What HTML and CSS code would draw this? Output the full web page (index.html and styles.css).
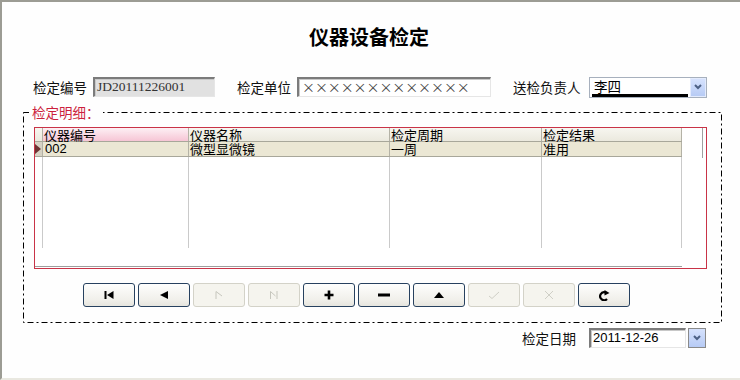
FILE: index.html
```html
<!DOCTYPE html>
<html lang="zh-CN">
<head>
<meta charset="utf-8">
<title>仪器设备检定</title>
<link rel="stylesheet" href="styles.css">
</head>
<body>
<div class="win">
  <h1 class="title">仪器设备检定</h1>
  <div class="row1">
    <span class="lbl l4">检定编号</span>
    <div class="inp inp-ro">JD20111226001</div>
    <span class="lbl l4 lgap">检定单位</span>
    <div class="inp inp-unit">×××××××××××××</div>
    <span class="lbl l5 lgap">送检负责人</span>
    <div class="combo">
      <span class="combo-text"><span class="uline">李四</span></span>
      <span class="ddbtn"><svg viewBox="0 0 10 10" width="10" height="10"><path d="M2 3 L5 6 L8 3" fill="none" stroke="#4d6185" stroke-width="2"/></svg></span>
    </div>
  </div>

  <div class="group">
    <svg class="group-border" width="699" height="211" viewBox="0 0 699 211"><rect x="0.5" y="0.5" width="698" height="210" fill="none" stroke="#000" stroke-width="1" stroke-dasharray="6 3 2 3"/></svg>
    <div class="legend">检定明细：</div>
    <div class="grid">
      <div class="tbl">
        <div class="trow thead">
          <div class="cell ind"></div>
          <div class="cell c1 sel">仪器编号</div>
          <div class="cell c2">仪器名称</div>
          <div class="cell c3">检定周期</div>
          <div class="cell c4">检定结果</div>
        </div>
        <div class="trow tdata">
          <div class="cell ind"><svg viewBox="0 0 6 10" width="6" height="10"><polygon points="0,0 6,5 0,10" fill="#6e3434"/></svg></div>
          <div class="cell c1 num">002</div>
          <div class="cell c2">微型显微镜</div>
          <div class="cell c3">一周</div>
          <div class="cell c4">准用</div>
        </div>
        <div class="tbody">
          <div class="bcol ind"></div>
          <div class="bcol c1"></div>
          <div class="bcol c2"></div>
          <div class="bcol c3"></div>
          <div class="bcol c4"></div>
        </div>
      </div>
      <div class="vtick"></div>
    </div>
    <div class="navbar">
      <button class="btn"><svg viewBox="0 0 10 8" width="10" height="8"><rect x="0.5" y="0" width="2" height="8"/><polygon points="9.5,0 3,4 9.5,8"/></svg></button>
      <button class="btn"><svg viewBox="0 0 8 8" width="8" height="8"><polygon points="8,0 0,4 8,8"/></svg></button>
      <button class="btn dis"><svg viewBox="0 0 10 10" width="10" height="10"><path d="M2 1.5 V9 M2 1.5 L8 6" fill="none" stroke="#c6c6bd" stroke-width="1"/></svg></button>
      <button class="btn dis"><svg viewBox="0 0 10 10" width="10" height="10"><path d="M1.5 1.5 V9 M1.5 1.5 L6.5 6 M8 1 V9" fill="none" stroke="#c6c6bd" stroke-width="1"/></svg></button>
      <button class="btn"><svg viewBox="0 0 10 10" width="10" height="10"><path d="M5 0.5 V9.5 M0.5 5 H9.5" fill="none" stroke="#000" stroke-width="2.6"/></svg></button>
      <button class="btn"><svg viewBox="0 0 12 4" width="12" height="4"><rect x="0" y="0.5" width="12" height="3"/></svg></button>
      <button class="btn"><svg viewBox="0 0 10 6" width="10" height="6"><polygon points="0,6 5,0 10,6"/></svg></button>
      <button class="btn dis"><svg viewBox="0 0 12 10" width="12" height="10"><path d="M1 6 L4 8.5 L11 2" fill="none" stroke="#cfcfc6" stroke-width="1"/></svg></button>
      <button class="btn dis"><svg viewBox="0 0 10 10" width="10" height="10"><path d="M1 1 L9 9 M9 1 L1 9" fill="none" stroke="#cfcfc6" stroke-width="1"/></svg></button>
      <button class="btn"><svg viewBox="0 0 11 11" width="11" height="11"><path d="M8 9 A4 4 0 1 1 6.5 2.4" fill="none" stroke="#000" stroke-width="2.2"/><polygon points="5.5,0 10.5,3 5.5,5.5" fill="#000"/></svg></button>
    </div>
  </div>

  <div class="daterow">
    <span class="lbl l4">检定日期</span>
    <div class="inp inp-date">2011-12-26</div>
    <span class="ddbtn ddbtn-date"><svg viewBox="0 0 10 10" width="10" height="10"><path d="M2 3 L5 6 L8 3" fill="none" stroke="#4d6185" stroke-width="2"/></svg></span>
  </div>
</div>
</body>
</html>
```

FILE: styles.css
```css
* { box-sizing: border-box; }

body {
  margin: 0;
  background: #fff;
}

.win {
  width: 740px;
  height: 380px;
  border-top: 2px solid #9c9c94;
  border-left: 2px solid #9c9c94;
  border-bottom: 2px solid #e9e8e0;
  background: #fefefe;
  font-family: "Noto Sans CJK SC", "Liberation Sans", sans-serif;
  color: #000;
  overflow: hidden;
}

.title {
  margin: 25px 0 0 0;
  height: 20px;
  font-size: 20px;
  line-height: 20px;
  font-weight: bold;
  text-align: center;
  padding-right: 4px;
}

.row1 {
  margin-top: 30px;
  height: 20px;
  display: flex;
  align-items: center;
  padding-left: 31px;
}

.lbl {
  font-size: 13.5px;
  line-height: 20px;
  white-space: nowrap;
  color: #111;
}

.l4 { width: 54px; margin-right: 6px; }
.l5 { width: 70px; margin-right: 6px; }
.lgap { margin-left: 22px; }

.inp {
  height: 20px;
  border-style: solid;
  border-width: 2px 1px 1px 2px;
  border-color: #7b7b7b #e6e6e6 #e6e6e6 #7b7b7b;
  box-shadow: inset 1px 1px 0 #c8c8c8;
  line-height: 16px;
  padding-left: 2px;
  white-space: nowrap;
  overflow: hidden;
}

.inp-ro {
  width: 122px;
  background: #e1e1e1;
  font-family: "Liberation Serif", serif;
  font-size: 13.5px;
  color: #333;
}

.inp-unit {
  width: 194px;
  background: #fff;
  font-size: 13px;
  color: #444;
  padding-left: 3px;
  letter-spacing: -0.1px;
}

.combo {
  width: 118px;
  height: 21px;
  border: 1px solid #a7b0bd;
  background: #fff;
  display: flex;
  align-items: stretch;
}

.combo-text {
  flex: 1;
  padding: 1px 2px 0 2px;
}

.uline {
  display: block;
  width: 96px;
  height: 18px;
  font-size: 13.5px;
  line-height: 15px;
  border-bottom: 3px solid #000;
  padding-left: 2px;
}

.ddbtn {
  width: 16px;
  background: linear-gradient(#d6e2fd, #b7cbf5);
  border: 1px solid #e3ebfd;
  display: flex;
  align-items: center;
  justify-content: center;
}

.group {
  position: relative;
  margin-top: 15px;
  margin-left: 21px;
  width: 699px;
  height: 211px;
  padding: 15px 0 0 11px;
}

.group-border {
  position: absolute;
  left: 0;
  top: 0;
}

.legend {
  position: absolute;
  left: 6px;
  top: -8px;
  background: #fefefe;
  color: #cc1f3d;
  font-size: 13.5px;
  line-height: 16px;
  padding: 0 3px 0 3px;
}

.grid {
  width: 673px;
  height: 142px;
  border: 1px solid #c93347;
  background: #fff;
  display: flex;
  align-items: flex-start;
}

.tbl {
  width: 647px;
  height: 139px;
  border-bottom: 1px solid #9e9e9e;
  display: flex;
  flex-direction: column;
}

.trow {
  display: flex;
  height: 15px;
  border-bottom: 1px solid #a8a79a;
}

.thead { height: 14px; background: linear-gradient(#f7f6f0, #ebe9de); }
.tdata { background: #ebe7d4; }

.cell {
  font-size: 13px;
  line-height: 13px;
  padding-left: 1px;
  white-space: nowrap;
  border-right: 1px solid #b4b2a6;
}

.ind {
  width: 8px;
  padding: 0;
  display: flex;
  align-items: center;
}

.tdata .ind { background: #d6d2c4; }

.c1 { width: 146px; }
.c2 { width: 201px; }
.c3 { width: 152px; }
.c4 { width: 140px; }

.sel { background: linear-gradient(#fdf0f4, #f6c5d5); }

.num {
  font-family: "Liberation Sans", sans-serif;
  font-size: 13px;
  line-height: 14px;
  padding-left: 2px;
}

.tbody {
  display: flex;
  align-items: flex-start;
}

.bcol {
  height: 91px;
  border-right: 1px solid #cacaca;
}

.vtick {
  width: 21px;
  height: 30px;
  border-right: 1px solid #a0a0a0;
}

.navbar {
  margin-top: 14px;
  margin-left: 49px;
  display: flex;
  gap: 3px;
}

.btn {
  width: 52px;
  height: 24px;
  padding: 0;
  border: 1px solid #27415f;
  border-radius: 3px;
  background: linear-gradient(#fefefd, #f1f0eb 70%, #e6e5de);
  display: flex;
  align-items: center;
  justify-content: center;
}

.btn.dis {
  border-color: #d3d2c8;
  background: #f5f4ee;
}

.daterow {
  margin-top: 5px;
  height: 20px;
  display: flex;
  justify-content: flex-end;
  align-items: center;
  padding-right: 34px;
}

.daterow .l4 { margin-right: 13px; }

.inp-date {
  width: 97px;
  background: #fff;
  font-family: "Liberation Sans", sans-serif;
  font-size: 13px;
  margin-right: 2px;
}

.ddbtn-date {
  width: 18px;
  height: 20px;
  border: 1px solid #8a8a8a;
}
```
